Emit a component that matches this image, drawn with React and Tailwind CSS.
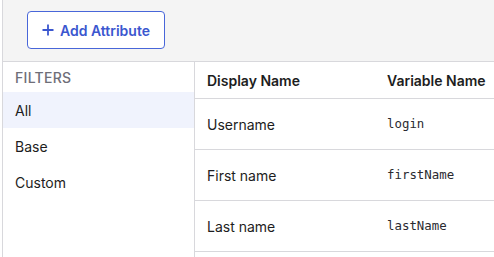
import React from "react";

export default function App() {
  const rows = [
    ["Username", "login"],
    ["First name", "firstName"],
    ["Last name", "lastName"],
  ];
  return (
    <div className="w-[494px] h-[257px] bg-white pl-[2px] overflow-hidden" style={{ fontFamily: "Inter, 'Liberation Sans', sans-serif" }}>
      <div className="h-full border-l border-[#d8d8dc] flex flex-col">
        <div className="h-[62px] bg-[#f4f4f4] border-b border-[#d8d8dc] pt-[11px] pl-[24px] shrink-0">
          <button className="h-[38px] w-[138px] rounded-[4px] border border-[#4866d9] bg-white text-[#3b57cf] text-[14px] font-semibold flex items-center justify-center gap-[6px]">
            <svg width="12" height="12" viewBox="0 0 12 12" fill="none" stroke="currentColor" strokeWidth="1.8">
              <path d="M6 0.5v11M0.5 6h11" />
            </svg>
            Add Attribute
          </button>
        </div>
        <div className="flex flex-1 min-h-0">
          <div className="w-[192px] border-r border-[#d8d8dc] shrink-0">
            <div className="h-[30px] pl-[12px] flex items-center text-[14px] font-medium text-[#6e6e78] tracking-[0.3px]">FILTERS</div>
            <div className="h-[36px] pl-[12px] flex items-center bg-[#f0f3fd] text-[14px] text-[#1d1d21]">All</div>
            <div className="h-[36px] pl-[12px] flex items-center text-[14px] text-[#1d1d21]">Base</div>
            <div className="h-[36px] pl-[12px] flex items-center text-[14px] text-[#1d1d21]">Custom</div>
          </div>
          <div className="flex-1">
            <div className="flex h-[37px] border-b border-[#d8d8dc] items-center text-[14px] font-semibold text-[#1d1d21]">
              <div className="w-[180px] pl-[12px]">Display Name</div>
              <div className="pl-[12px]">Variable Name</div>
            </div>
            {rows.map(([a, b]) => (
              <div key={a} className="flex h-[51px] border-b border-[#d8d8dc] items-center text-[14px] text-[#1d1d21]">
                <div className="w-[180px] pl-[12px]">{a}</div>
                <div className="pl-[12px] text-[12.4px] text-[#2a2a30]" style={{ fontFamily: "'DejaVu Sans Mono', monospace" }}>{b}</div>
              </div>
            ))}
          </div>
        </div>
      </div>
    </div>
  );
}
